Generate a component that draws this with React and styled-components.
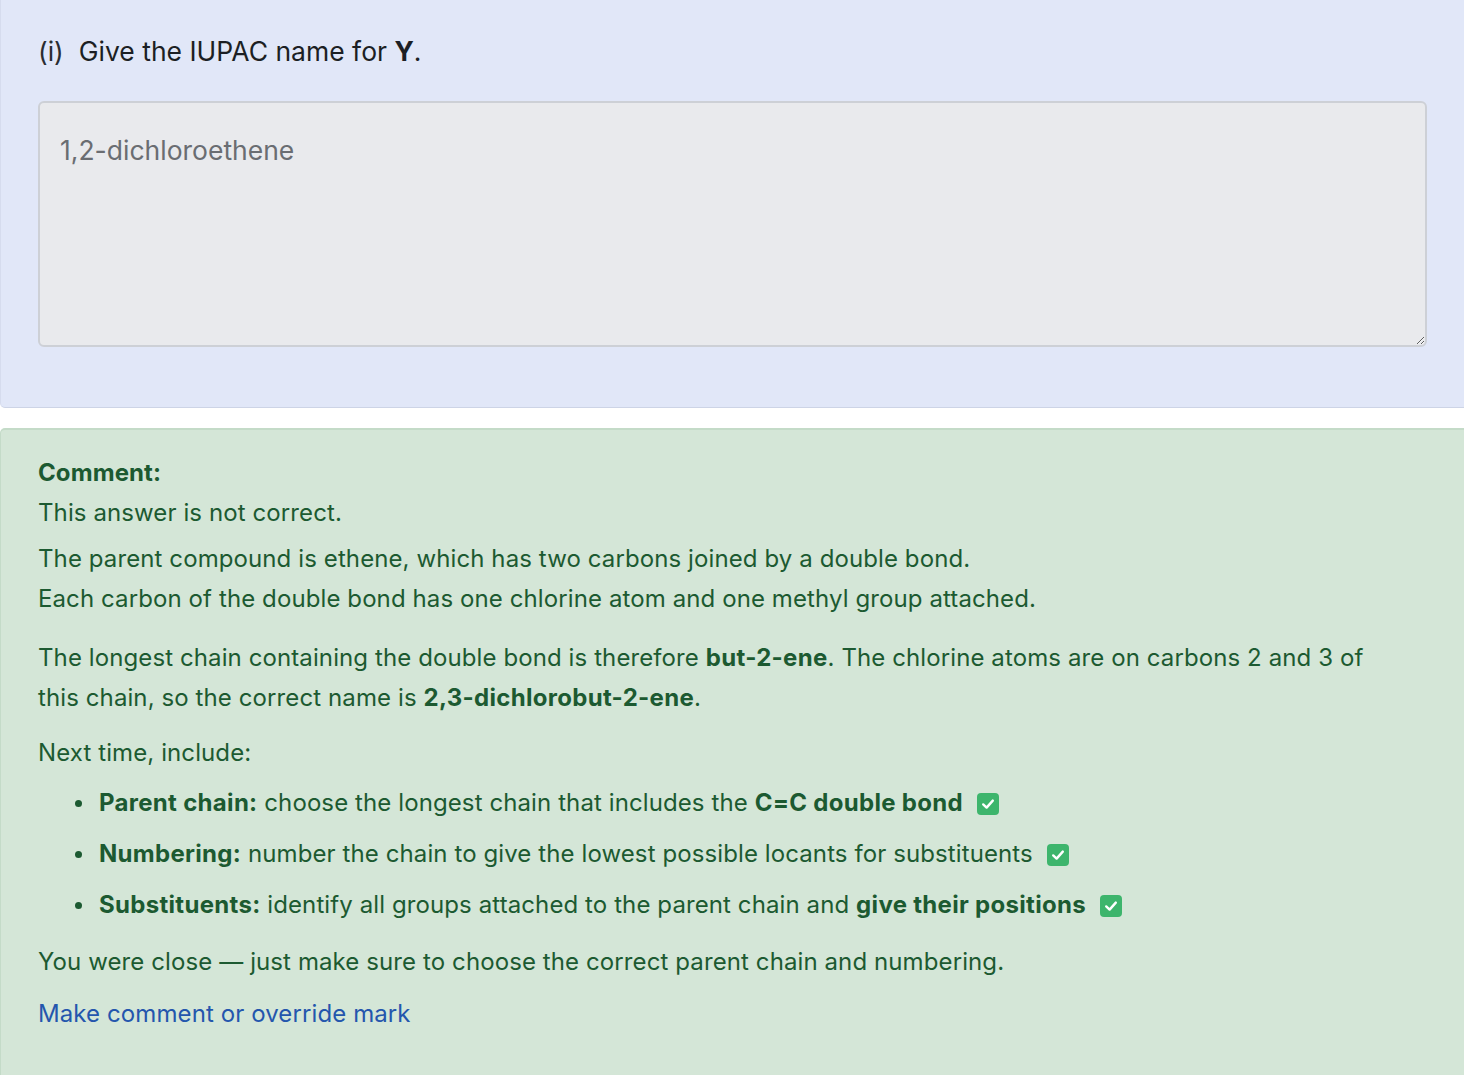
import React from "react"
import styled, { createGlobalStyle } from "styled-components"

const GlobalStyle = createGlobalStyle`
  body {
    margin: 0;
    background: #ffffff;
    font-family: Inter, "Noto Sans", "Liberation Sans", sans-serif;
  }
`

const CheckMark = () => (
  <Check>
    <svg width="16" height="16" viewBox="0 0 16 16">
      <path
        d="M3.2 8.4 L6.6 11.6 L12.8 4.6"
        fill="none"
        stroke="#ffffff"
        strokeWidth="2.4"
        strokeLinecap="round"
        strokeLinejoin="round"
      />
    </svg>
  </Check>
)

const App = () => {
  return (
    <Page>
      <GlobalStyle />
      <QuestionPanel>
        <Question>
          <Label>(i)</Label>
          <span>
            Give the IUPAC name for <b>Y</b>.
          </span>
        </Question>
        <Answer readOnly defaultValue="1,2-dichloroethene" />
      </QuestionPanel>

      <CommentPanel>
        <CommentTitle>Comment:</CommentTitle>
        <Para>This answer is not correct.</Para>
        <Para $top={6}>
          The parent compound is ethene, which has two carbons joined by a double bond.
          <br />
          Each carbon of the double bond has one chlorine atom and one methyl group attached.
        </Para>
        <Para $top={19}>
          The longest chain containing the double bond is therefore <b>but-2-ene</b>. The
          chlorine atoms are on carbons 2 and 3 of this chain, so the correct name is{" "}
          <b>2,3-dichlorobut-2-ene</b>.
        </Para>
        <Para $top={15}>Next time, include:</Para>
        <List>
          <Item>
            <b>Parent chain:</b> choose the longest chain that includes the{" "}
            <b>C=C double bond</b>
            <CheckMark />
          </Item>
          <Item>
            <b>Numbering:</b> number the chain to give the lowest possible locants for
            substituents
            <CheckMark />
          </Item>
          <Item>
            <b>Substituents:</b> identify all groups attached to the parent chain and{" "}
            <b>give their positions</b>
            <CheckMark />
          </Item>
        </List>
        <Para $top={17}>
          You were close — just make sure to choose the correct parent chain and numbering.
        </Para>
        <Link href="#">Make comment or override mark</Link>
      </CommentPanel>
    </Page>
  )
}

export default App

const Page = styled.div`
  width: 1464px;
  min-height: 1075px;
  overflow: hidden;
`

const QuestionPanel = styled.section`
  background: #e1e7f8;
  border-bottom: 1px solid #cdd4e6;
  border-left: 1px solid #d6dcee;
  border-radius: 0 0 0 5px;
  padding: 30px 37px 60px 37px;
`

const Question = styled.div`
  display: flex;
  gap: 15px;
  font-size: 26.5px;
  line-height: 42px;
  color: #1c1f24;

  b {
    font-weight: 700;
  }
`

const Label = styled.span`
  color: #2a2d31;
`

const Answer = styled.textarea`
  display: block;
  box-sizing: border-box;
  width: 100%;
  height: 246px;
  margin-top: 29px;
  padding: 29px 20px;
  background: #e9eaed;
  border: 2px solid #cdd0d6;
  border-radius: 6px;
  font-family: inherit;
  font-size: 26.5px;
  line-height: 36px;
  color: #6a6d72;
  resize: vertical;
  outline: none;
`

const CommentPanel = styled.section`
  margin-top: 20px;
  background: #d4e6d7;
  border-top: 2px solid #c4dbc8;
  border-left: 1px solid #c4dbc8;
  border-radius: 5px 0 0 0;
  padding: 23px 38px 40px 37px;
  color: #1c5a31;
  font-size: 24px;
  line-height: 40px;
  letter-spacing: 0.1px;
  min-height: 600px;

  b {
    font-weight: 700;
    letter-spacing: 0.3px;
  }
`

const CommentTitle = styled.div`
  font-weight: 700;
`

const Para = styled.p`
  margin: ${(p) => p.$top || 0}px 0 0 0;
  max-width: 1340px;
`

const List = styled.ul`
  margin: 10px 0 0 0;
  padding-left: 61px;
  list-style: none;
`

const Item = styled.li`
  margin-bottom: 11px;

  &::before {
    content: "";
    display: inline-block;
    width: 7px;
    height: 7px;
    margin-left: -24px;
    margin-right: 17px;
    vertical-align: 4px;
    border-radius: 50%;
    background: #1c5a31;
  }
`

const Check = styled.span`
  display: inline-flex;
  align-items: center;
  justify-content: center;
  width: 22px;
  height: 22px;
  margin-left: 14px;
  vertical-align: -1px;
  background: #3db56c;
  border-radius: 4px;
`

const Link = styled.a`
  display: block;
  margin-top: 12px;
  color: #2456ad;
  text-decoration: none;
`
